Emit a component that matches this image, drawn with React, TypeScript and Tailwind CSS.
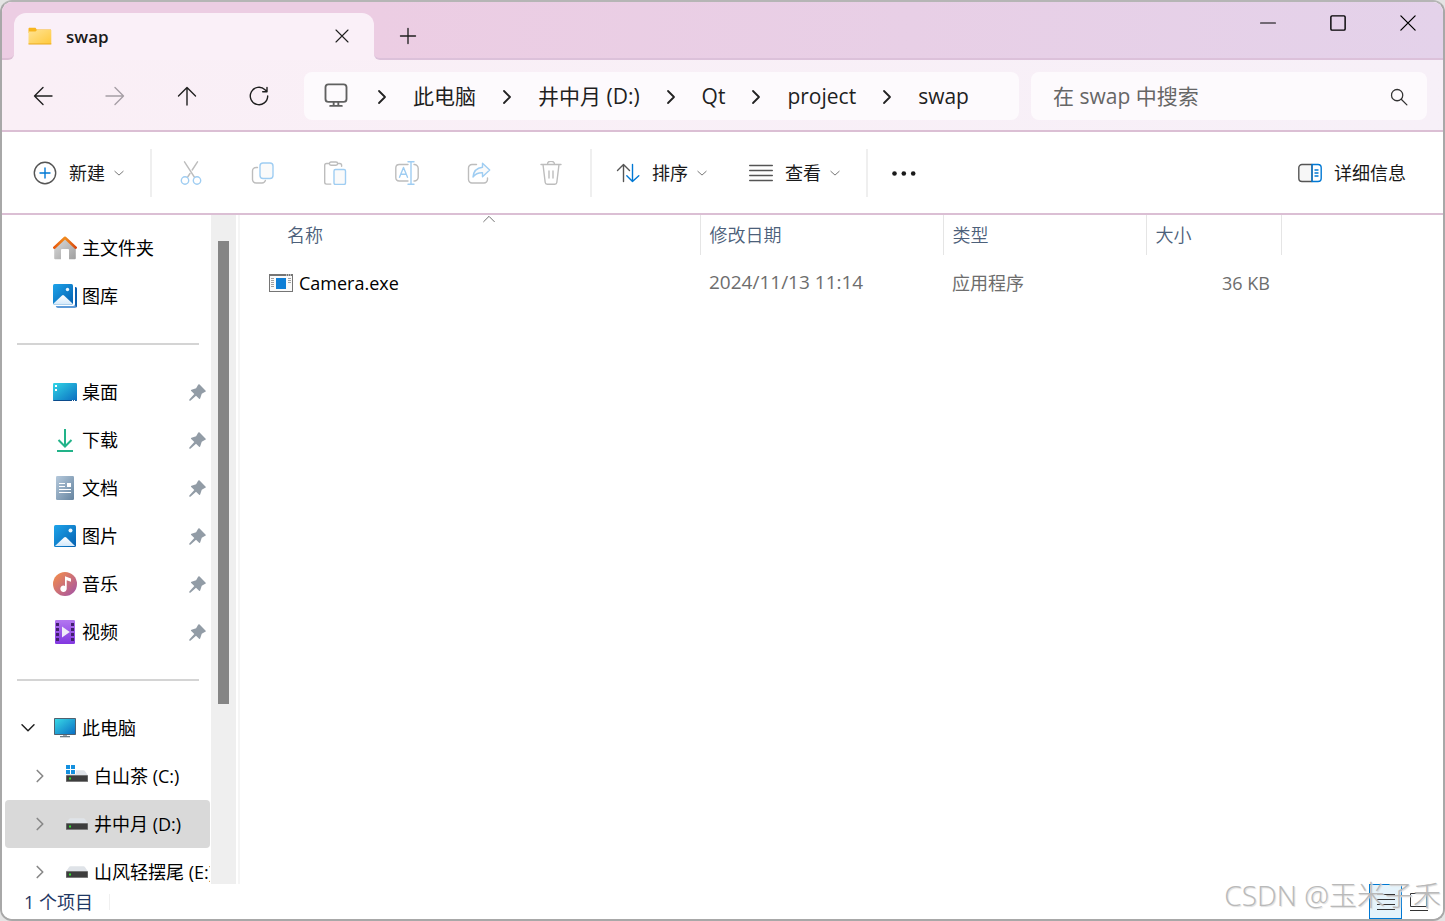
import { Fragment } from 'react';
import type { ReactNode } from 'react';

const stroke = {
  fill: 'none',
  strokeLinecap: 'round' as const,
  strokeLinejoin: 'round' as const,
};

function Icon({ children, className = 'size-6', color = '#1f1f1f', width = 1.4 }: {
  children: ReactNode; className?: string; color?: string; width?: number;
}) {
  return (
    <svg viewBox="0 0 24 24" className={`shrink-0 ${className}`} stroke={color} strokeWidth={width} aria-hidden="true" {...stroke}>
      {children}
    </svg>
  );
}

const GREY = '#bdbdbd';
const BLUE = '#9fcdf2';

function FolderIcon() {
  return (
    <svg viewBox="0 0 24 18" className="h-[18px] w-6 shrink-0" aria-hidden="true">
      <defs>
        <linearGradient id="folder" x1="0" y1="0" x2="1" y2="1">
          <stop offset="0" stopColor="#ffe394" />
          <stop offset="1" stopColor="#ffc93c" />
        </linearGradient>
      </defs>
      <path d="M1 .8h6.500l1.200 1.700H23V6H.5V1.500z" fill="#f7b51e" />
      <path d="M.5 4.600h7L9 3h14.300v14H.5z" fill="url(#folder)" />
      <path d="M.5 16.500h22.800v1H.5z" fill="#e9a81c" />
    </svg>
  );
}

function HomeIcon() {
  return (
    <svg viewBox="0 0 24 24" className="size-6" aria-hidden="true">
      <defs>
        <linearGradient id="roof" x1="0" y1="0" x2="1" y2="0">
          <stop offset="0" stopColor="#e8590c" /><stop offset=".5" stopColor="#f08c1e" /><stop offset="1" stopColor="#d9480f" />
        </linearGradient>
        <linearGradient id="wall" x1="0" y1="0" x2="1" y2="1">
          <stop offset="0" stopColor="#dcdcdc" /><stop offset="1" stopColor="#9f9f9f" />
        </linearGradient>
      </defs>
      <path d="M1.200 11 12 2l10.800 9v11.200a1 1 0 0 1-1 1H16V14a1 1 0 0 0-1-1H9a1 1 0 0 0-1 1v9.200H2.200a1 1 0 0 1-1-1z" fill="url(#wall)" />
      <path d="M1.300 11.700 12 1.800l10.700 9.900" fill="none" stroke="url(#roof)" strokeWidth="2.600" strokeLinecap="round" strokeLinejoin="round" />
    </svg>
  );
}

function PictureDefs({ id }: { id: string }) {
  return (
    <defs>
      <linearGradient id={id} x1="0" y1="0" x2="1" y2="1">
        <stop offset="0" stopColor="#1ea4ea" /><stop offset="1" stopColor="#0560b0" />
      </linearGradient>
      <linearGradient id={`${id}-hill`} x1="0" y1="0" x2="0" y2="1">
        <stop offset="0" stopColor="#fff" /><stop offset="1" stopColor="#d3e9fb" />
      </linearGradient>
    </defs>
  );
}

function GalleryIcon() {
  return (
    <svg viewBox="0 0 24 24" className="size-6" aria-hidden="true">
      <PictureDefs id="gallery" />
      <path d="M22 3c1.200.2 2 .8 2 2v16.500c0 1.500-1 2.500-2.500 2.500H5c-1.200 0-2-.8-2.200-2H20a2 2 0 0 0 2-2z" fill="#5f9bd8" />
      <path d="M22 3c1.200.2 2 .8 2 2v16.500c0 1-.5 1.600-1 2l-1-3z" fill="#0b5fb0" />
      <rect width="20" height="20.500" rx="1.500" fill="url(#gallery)" />
      <path d="M.5 19.500 9 11.500q1-1 2 0l8.500 8q-.5 1-1.500 1H2q-1 0-1.500-1z" fill="url(#gallery-hill)" />
      <circle cx="14.500" cy="5.500" r="1.700" fill="#e9f6ff" />
    </svg>
  );
}

function PictureIcon() {
  return (
    <svg viewBox="0 0 24 24" className="size-6" aria-hidden="true">
      <PictureDefs id="picture" />
      <rect x="1" y="1" width="22" height="22" rx="1.500" fill="url(#picture)" />
      <path d="M2 22 11 13.500q1.200-1 2.300 0L22 22z" fill="url(#picture-hill)" />
      <circle cx="17.500" cy="6.500" r="2" fill="#e9f6ff" />
    </svg>
  );
}

function DesktopIcon() {
  return (
    <svg viewBox="0 0 24 24" className="size-6" aria-hidden="true">
      <defs>
        <linearGradient id="desk" x1="0" y1="0" x2="1" y2="1">
          <stop offset="0" stopColor="#31d5e6" /><stop offset="1" stopColor="#0a6cc0" />
        </linearGradient>
      </defs>
      <rect y="3" width="24" height="18" rx="1.300" fill="url(#desk)" />
      <path d="M.3 20h23.400v.5a.6.6 0 0 1-.6.500H1a.6.6 0 0 1-.7-.5z" fill="#0b4b8c" />
      <path d="M2 5h2v2H2zM2 9h2v2H2zM19 20h1v1h-1zM21 20h1v1h-1z" fill="#fff" />
    </svg>
  );
}

function DownloadIcon() {
  return (
    <svg viewBox="0 0 24 24" className="size-6" fill="none" stroke="#22b389" strokeWidth="2" aria-hidden="true">
      <path d="M12 1v17M5.500 12l6.500 6.500 6.500-6.500M4 23h16" />
    </svg>
  );
}

function DocumentIcon() {
  return (
    <svg viewBox="0 0 24 24" className="size-6" aria-hidden="true">
      <defs>
        <linearGradient id="doc" x1="0" y1="0" x2="1" y2="1">
          <stop offset="0" stopColor="#b5c9dc" /><stop offset="1" stopColor="#66849f" />
        </linearGradient>
      </defs>
      <rect x="3" width="18" height="24" rx="1.300" fill="url(#doc)" />
      <path d="M6 7.500h6M6 10.500h6M6 13.500h12M6 16.500h12" stroke="#fff" strokeWidth="1" />
      <path d="M14 7h4v4h-4z" fill="#fff" />
    </svg>
  );
}

function MusicIcon() {
  return (
    <svg viewBox="0 0 24 24" className="size-6" aria-hidden="true">
      <defs>
        <linearGradient id="music" x1="0" y1="0" x2="1" y2="1">
          <stop offset=".1" stopColor="#f08a4f" /><stop offset=".9" stopColor="#a9579f" />
        </linearGradient>
      </defs>
      <circle cx="12" cy="12" r="12" fill="url(#music)" />
      <path d="M12 4.300 18 6.500v3.300l-4.300-1.600v8.500a3.200 3.200 0 1 1-1.700-2.800z" fill="#fff" />
    </svg>
  );
}

function VideoIcon() {
  return (
    <svg viewBox="0 0 24 24" className="size-6" aria-hidden="true">
      <defs>
        <linearGradient id="video" x1="0" y1="0" x2="0" y2="1">
          <stop offset="0" stopColor="#b377f0" /><stop offset="1" stopColor="#8237e0" />
        </linearGradient>
      </defs>
      <rect x="2" width="20" height="24" rx="1.300" fill="url(#video)" />
      <path d="M3 3h3v3H3zM3 8h3v3H3zM3 13h3v3H3zM3 18h3v3H3zM18 3h3v3h-3zM18 8h3v3h-3zM18 13h3v3h-3zM18 18h3v3h-3z" fill="#42206f" />
      <path d="M9 6.500 16.800 12 9 17.500z" fill="#f0ebf8" />
    </svg>
  );
}

function ComputerIcon() {
  return (
    <svg viewBox="0 0 24 24" className="size-6" aria-hidden="true">
      <defs>
        <linearGradient id="pc" x1="0" y1="0" x2="1" y2="1">
          <stop offset="0" stopColor="#38d8e6" /><stop offset="1" stopColor="#0a6fc4" />
        </linearGradient>
      </defs>
      <path d="M10 18h4v2.500h-4z" fill="#9aa5ad" />
      <path d="M7 20h10v1.300H7z" fill="#6d7a83" />
      <rect x="1" y="2" width="22" height="17" rx=".8" fill="#4f6170" />
      <rect x="2" y="3" width="20" height="15" fill="url(#pc)" />
    </svg>
  );
}

function DriveIcon({ system = false }: { system?: boolean }) {
  return (
    <svg viewBox="0 0 24 24" className="size-6" aria-hidden="true">
      <path d="M5.500 6.300h13q1 0 1.600 1L23 11.500H1l2.900-4.200q.6-1 1.600-1z" fill="#dfe3e8" />
      <rect x="1" y="11" width="22" height="7" rx=".6" fill="#8a8a8a" />
      <rect x="1.500" y="11.700" width="21" height="5.500" fill="#3d3d3d" />
      <rect x="4" y="13.500" width="2" height="2" fill="#2fe02f" />
      {system && (
        <g>
          <path d="M0 0h11v10H0z" fill="#fff" />
          <path d="M1 1h4v4H1zM6 1h4v4H6zM1 6h4v4H1zM6 6h4v4H6z" fill="#1490df" />
        </g>
      )}
    </svg>
  );
}

function PinIcon() {
  return (
    <svg viewBox="0 0 16 16" className="size-[17px] shrink-0" fill="#929ca6" aria-hidden="true">
      <path d="M9.700.3 15.700 6.300q.5.800-.4 1.100L12 9.200l-1.400 4.300q-.4 1-1.100.3L6.600 11 1.300 15.700H.3v-1L5 9.400 2.100 6.600q-.7-.7.3-1.100L6.700 4 8.600.7q.4-.8 1.100-.4z" />
    </svg>
  );
}

function AppIcon() {
  return (
    <svg viewBox="0 0 24 18" className="h-[18px] w-6 shrink-0" aria-hidden="true">
      <rect x=".5" y=".5" width="23" height="17" fill="#fafafa" stroke="#757575" />
      <path d="M0 0h24v2H0z" fill="#757575" />
      <path d="M17 1h1M19 1h1M21 1h1" stroke="#fff" strokeWidth="1" />
      <path d="M2 4.500h3M2 6.500h3M2 8.500h3M2 10.500h3M2 12.500h3M19 4.500h3M19 6.500h3M19 8.500h3" stroke="#a0a0a0" />
      <rect x="7" y="4" width="10" height="11" fill="#0f7fd6" />
    </svg>
  );
}

function ChevronDown() {
  return <Icon className="size-[10px]" color="#777" width={2.400}><path d="m2 8 10 9 10-9" /></Icon>;
}

function ChevronRight({ className = 'size-6', color = '#222', width = 1.800 }: { className?: string; color?: string; width?: number }) {
  return <Icon className={className} color={color} width={width}><path d="m9 6 6 6-6 6" /></Icon>;
}

function NavButtons() {
  const button = 'flex size-12 items-center justify-center rounded-lg';
  return (
    <div className="flex shrink-0 gap-6">
      <button aria-label="后退" className={button}><Icon><path d="M21 12H3.500M12 3.500 3.500 12l8.500 8.500" /></Icon></button>
      <button aria-label="前进" disabled className={button}><Icon color="#a59fa5"><path d="M3 12h17.500M12 3.500l8.500 8.500-8.500 8.500" /></Icon></button>
      <button aria-label="向上" className={button}><Icon><path d="M12 21V3.500M3.500 12 12 3.500l8.500 8.500" /></Icon></button>
      <button aria-label="刷新" className={button}>
        <Icon><path d="M20.700 12a8.700 8.700 0 1 1-2.700-6.300L20 7.600M20 3.500v4.300h-4.300" /></Icon>
      </button>
    </div>
  );
}

const crumbs = ['此电脑', '井中月 (D:)', 'Qt', 'project', 'swap'];

function TitleBar() {
  return (
    <div className="flex h-[58px]">
      <div className="w-3 shrink-0 bg-[#faeff7]">
        <div className="h-full rounded-br-md border-b-2 border-[#dcbfd5] bg-[#eccde3]" />
      </div>
      <div className="w-[360px] min-w-0 bg-[#eccde3] pt-[11px]">
        <div className="flex h-full items-center rounded-t-xl bg-[#faf0f8] pr-5 pb-[2px] pl-[14px]">
          <FolderIcon />
          <span className="ml-[14px] flex-1 truncate pt-[2px] text-[17px] font-semibold text-[#1a1a1a]">swap</span>
          <button aria-label="关闭标签页" className="flex size-6 items-center justify-center">
            <Icon className="size-[18px]" width={1.500}><path d="m4 4 16 16M20 4 4 20" /></Icon>
          </button>
        </div>
      </div>
      <div className="min-w-0 flex-1 bg-[#faeff7]">
        <div className="flex h-full justify-between rounded-bl-md border-b-2 border-[#dcc1da] bg-linear-to-r from-[#eccde3] via-[#e8cfe6] to-[#e4d2ea]">
          <button aria-label="新建标签页" className="mt-[10px] ml-[10px] flex size-12 items-center justify-center">
            <Icon className="size-[18px]" width={1.800}><path d="M12 2v20M2 12h20" /></Icon>
          </button>
          <div className="flex h-[41px]">
            <button aria-label="最小化" className="flex w-[70px] items-center justify-center">
              <Icon className="size-[18px]" color="#000" width={1.400}><path d="M2 12h20" /></Icon>
            </button>
            <button aria-label="最大化" className="flex w-[70px] items-center justify-center">
              <Icon className="size-[18px]" color="#000" width={1.900}><rect x="2.500" y="2.500" width="19" height="19" rx="1.500" /></Icon>
            </button>
            <button aria-label="关闭" className="flex w-[70px] items-center justify-center">
              <Icon className="size-[18px]" color="#000" width={1.700}><path d="m2.500 2.500 19 19M21.500 2.500l-19 19" /></Icon>
            </button>
          </div>
        </div>
      </div>
    </div>
  );
}

function AddressRow() {
  return (
    <div className="flex h-[72px] items-center gap-3 border-b-2 border-[#dbbfd4] bg-linear-to-r from-[#faeff6] to-[#f7f0f8] pt-[2px] pr-4 pl-[17px]">
      <NavButtons />
      <nav aria-label="路径" className="ml-[9px] flex h-12 min-w-0 flex-[715_1_715px] items-center rounded-lg bg-[#fdfafd] pl-[18px] text-[21px] whitespace-nowrap text-[#1f1f1f]">
        <Icon className="mr-px size-7" color="#606060" width={1.600}>
          <rect x="3" y="2" width="18" height="15" rx="2.500" />
          <path d="M10 17v3.300M14 17v3.300M7 20.500h10" />
        </Icon>
        {crumbs.map((name) => (
          <Fragment key={name}>
            <span className="flex w-[62px] shrink-0 justify-center pt-[2px]"><ChevronRight width={1.800} /></span>
            <a href="#" className="pt-[2px]">{name}</a>
          </Fragment>
        ))}
      </nav>
      <label className="flex h-12 min-w-0 flex-[396_1_396px] items-center rounded-lg bg-[#fdfafd] pt-[2px] pr-[19px] pl-[22px]">
        <input type="search" aria-label="搜索" placeholder="在 swap 中搜索" className="min-w-0 flex-1 bg-transparent text-[21px] outline-none placeholder:text-[#666]" />
        <Icon className="size-[18px]" color="#333" width={1.700}><circle cx="9.500" cy="9.500" r="7.500" /><path d="m15 15 7.500 7.500" /></Icon>
      </label>
    </div>
  );
}

const editTools: { label: string; art: ReactNode }[] = [
  {
    label: '剪切',
    art: (
      <>
        <path d="M5.500.8 15.300 16M18.500.8 13.200 9M11 12.500 8.700 16" stroke={GREY} />
        <circle cx="6" cy="19.500" r="3.700" stroke={BLUE} /><circle cx="18" cy="19.500" r="3.700" stroke={BLUE} />
      </>
    ),
  },
  {
    label: '复制',
    art: (
      <>
        <path d="M6.500 6.500H5a3.500 3.500 0 0 0-3.500 3.500v8.500A3.500 3.500 0 0 0 5 22h6a3.500 3.500 0 0 0 3.400-2.600" stroke={GREY} />
        <rect x="9" y="2" width="13" height="15.500" rx="3" fill="#fafafa" stroke={BLUE} />
      </>
    ),
  },
  {
    label: '粘贴',
    art: (
      <>
        <path d="M6.500 2.500H3.500A1.800 1.800 0 0 0 1.700 4.300v17a1.800 1.800 0 0 0 1.800 1.800h4.300M14.500 2.500h2.300a1.800 1.800 0 0 1 1.800 1.800v1M8 1h5a1.500 1.500 0 0 1 0 3.200H8A1.500 1.500 0 0 1 8 1z" stroke={GREY} />
        <rect x="11" y="8.500" width="11.500" height="15" rx="1.500" fill="#fafafa" stroke={BLUE} />
      </>
    ),
  },
  {
    label: '重命名',
    art: (
      <>
        <path d="M13 3.500H4.200A3.500 3.500 0 0 0 .8 7v9.500A3.500 3.500 0 0 0 4.200 20H13M19 3.500a3.800 3.800 0 0 1 4.200 3.700v9A3.800 3.800 0 0 1 19 20" stroke={GREY} />
        <path d="M4.500 16.300 8.500 6.500l4 9.800M5.800 13.300h5.400M16 .8v22.400M13 .8h6M13 23.200h6" stroke={BLUE} />
      </>
    ),
  },
  {
    label: '共享',
    art: (
      <>
        <path d="M9.500 3.500H5A3.500 3.500 0 0 0 1.500 7v11.500A3.500 3.500 0 0 0 5 22h12a3.500 3.500 0 0 0 3.500-3.500V17" stroke={GREY} />
        <path d="M15.500 2.200 22.700 9l-7.200 6.800v-4c-4-.2-6.800.8-9.500 4.200.4-5.500 3.700-9.200 9.500-9.800z" fill="#fafafa" stroke={BLUE} />
      </>
    ),
  },
  {
    label: '删除',
    art: <path d="M2 3.500h20M4 3.500l2.200 18A2 2 0 0 0 8.200 23.200h7.600a2 2 0 0 0 2-1.700L20 3.500M8.500 3.200a3.500 3 0 0 1 7 0M10 10v7M14 10v7" stroke={GREY} />,
  },
];

function Divider() {
  return <div className="h-12 w-[2px] shrink-0 bg-[#efefef]" />;
}

function Toolbar() {
  const button = 'flex shrink-0 items-center whitespace-nowrap';
  return (
    <div className="flex h-[83px] items-center border-b-2 border-[#dbbfd4] bg-white text-lg text-[#1a1a1a]">
      <button className={`${button} gap-3 pr-[26px] pl-[31px]`}>
        <Icon color="#555"><circle cx="12" cy="12" r="10.700" /><path d="M12 7v10M7 12h10" stroke="#0078d4" /></Icon>
        <span className="flex items-center gap-[9px]">新建<ChevronDown /></span>
      </button>
      <Divider />
      <div className="flex px-[3px]">
        {editTools.map((tool) => (
          <button key={tool.label} aria-label={tool.label} disabled className="flex h-12 w-[72px] items-center justify-center">
            <Icon>{tool.art}</Icon>
          </button>
        ))}
      </div>
      <Divider />
      <button className={`${button} gap-3 pl-6`}>
        <Icon><path d="M7.500 20.500V3.500M1.500 9.500l6-6 6 6" stroke="#555" /><path d="M16.500 3.500v17M10.800 14.800l5.700 5.700 6.300-5.700" stroke="#0078d4" /></Icon>
        <span className="flex items-center gap-[9px]">排序<ChevronDown /></span>
      </button>
      <button className={`${button} gap-3 pr-[26px] pl-[42px]`}>
        <Icon color="#555"><path d="M.7 4.500h22.600M.7 9.500h22.600M.7 14.500h22.600M.7 19.500h22.600" /></Icon>
        <span className="flex items-center gap-[9px]">查看<ChevronDown /></span>
      </button>
      <Divider />
      <button aria-label="更多" className="flex h-12 w-[72px] items-center justify-center">
        <Icon><g fill="#1a1a1a" stroke="none"><circle cx="2.500" cy="12.500" r="2.300" /><circle cx="11.800" cy="12.500" r="2.300" /><circle cx="21.200" cy="12.500" r="2.300" /></g></Icon>
      </button>
      <button className={`${button} mr-[37px] ml-auto gap-3`}>
        <Icon color="#555">
          <path d="M14 3.500H4A3.200 3.200 0 0 0 .8 6.700v10.600A3.200 3.200 0 0 0 4 20.500h10z" fill="#f7f7f7" />
          <path d="M14 3.500h6a3.200 3.200 0 0 1 3.200 3.200v10.600a3.200 3.200 0 0 1-3.200 3.200h-6zM17 9h3M17 12h3M17 15h3" stroke="#0078d4" />
        </Icon>
        详细信息
      </button>
    </div>
  );
}

function Place({ icon, label, pinned = false }: { icon: ReactNode; label: string; pinned?: boolean }) {
  return (
    <li>
      <a href="#" className="flex h-12 items-center gap-[5px] pr-[5px] pl-[51px]">
        {icon}
        <span className="flex-1 whitespace-nowrap">{label}</span>
        {pinned && <PinIcon />}
      </a>
    </li>
  );
}

function Drive({ label, system = false, selected = false }: { label: string; system?: boolean; selected?: boolean }) {
  return (
    <li>
      <a href="#" className={`mr-px ml-[3px] flex h-12 items-center gap-[5px] overflow-hidden rounded-sm pl-6 ${selected ? 'bg-[#d9d9d9]' : ''}`}>
        <ChevronRight className="size-[22px]" color="#888" width={1.800} />
        <span className="ml-[9px] shrink-0"><DriveIcon system={system} /></span>
        <span className="whitespace-nowrap">{label}</span>
      </a>
    </li>
  );
}

function Separator() {
  return <li role="separator" className="flex h-12 items-center pr-3 pl-[15px]"><div className="h-[2px] flex-1 bg-[#d4d4d4]" /></li>;
}

function Sidebar() {
  return (
    <aside className="flex w-[238px] shrink-0 overflow-hidden border-r-2 border-[#f5f5f5]">
      <ul className="w-[209px] shrink-0 overflow-hidden pt-[9px] text-lg text-black">
        <Place icon={<HomeIcon />} label="主文件夹" />
        <Place icon={<GalleryIcon />} label="图库" />
        <Separator />
        <Place icon={<DesktopIcon />} label="桌面" pinned />
        <Place icon={<DownloadIcon />} label="下载" pinned />
        <Place icon={<DocumentIcon />} label="文档" pinned />
        <Place icon={<PictureIcon />} label="图片" pinned />
        <Place icon={<MusicIcon />} label="音乐" pinned />
        <Place icon={<VideoIcon />} label="视频" pinned />
        <Separator />
        <li>
          <a href="#" className="flex h-12 items-center gap-[5px] pl-[18px]">
            <Icon className="size-4" width={2.200}><path d="m3 7 9 9 9-9" /></Icon>
            <span className="ml-3"><ComputerIcon /></span>
            <span>此电脑</span>
          </a>
        </li>
        <Drive label="白山茶 (C:)" system />
        <Drive label="井中月 (D:)" selected />
        <Drive label="山风轻摆尾 (E:)" />
      </ul>
      <div className="w-[25px] bg-[#efefef] pt-[26px]">
        <div className="mx-auto h-[463px] w-[11px] bg-[#858585]" />
      </div>
    </aside>
  );
}

function FileTable() {
  const head = 'h-10 border-r border-[#e5e5e5] p-0 text-left font-[350] text-[#4c607a]';
  return (
    <main className="min-w-0 flex-1 overflow-hidden">
      <table className="table-fixed border-collapse text-lg whitespace-nowrap">
        <colgroup>
          <col className="w-[460px]" /><col className="w-[243px]" /><col className="w-[203px]" /><col className="w-[135px]" />
        </colgroup>
        <thead>
          <tr>
            <th className={`${head} pl-[47px]`} aria-sort="ascending">
              <div className="flex">
                <span className="w-[194px]">名称</span>
                <Icon className="-mt-2 size-4" color="#666"><path d="m4 13 8-8 8 8" /></Icon>
              </div>
            </th>
            <th className={`${head} pl-[9px]`}>修改日期</th>
            <th className={`${head} pl-[9px]`}>类型</th>
            <th className={`${head} pl-[9px]`}>大小</th>
          </tr>
        </thead>
        <tbody>
          <tr className="h-14 text-[#6d6d6d]">
            <td className="p-0 pl-[29px]">
              <a href="#" className="flex items-center gap-[6px] font-normal text-black"><AppIcon />Camera.exe</a>
            </td>
            <td className="p-0 pl-[9px] text-[19px] font-normal">2024/11/13 11:14</td>
            <td className="p-0 pl-[9px]">应用程序</td>
            <td className="p-0 pr-[11px] text-right font-normal">36 KB</td>
          </tr>
        </tbody>
      </table>
    </main>
  );
}

function StatusBar() {
  return (
    <footer className="relative flex h-[35px] shrink-0 items-center bg-white text-lg text-[#1f3864]">
      <span className="pl-[22px]">1 个项目</span>
      <div className="ml-4 h-4 w-px bg-[#f0f0f0]" />
      <div className="mr-[14px] ml-auto flex h-full items-center gap-[7px]">
        <button aria-label="详细列表" className="flex h-full w-[33px] items-center justify-center border border-[#0078d4] bg-[#e5f3fb]">
          <svg viewBox="0 0 20 20" className="size-5" stroke="#333" aria-hidden="true"><path d="M1 2.500h18M1 7.500h18M1 12.500h18M1 17.500h18" /></svg>
        </button>
        <button aria-label="大缩略图">
          <svg viewBox="0 0 20 20" className="size-5" fill="none" stroke="#333" aria-hidden="true"><path d="M1.500 1.500h16v13h-16zM1 18.500h18" /></svg>
        </button>
      </div>
      <span className="pointer-events-none absolute right-[2px] bottom-1 text-[28px] leading-10 font-light whitespace-nowrap text-[#b9b9b9] [text-shadow:1px_1px_1px_#ddd]">
        CSDN @玉米子禾
      </span>
    </footer>
  );
}

export default function App() {
  return (
    <div className="h-screen bg-[#e4e4e4] font-['Open_Sans','Noto_Sans_CJK_SC',sans-serif] font-[380]" lang="zh-CN">
      <div className="flex h-full flex-col overflow-hidden rounded-xl border-2 border-[#a8a8a8] border-t-[#b5b5b5] bg-white">
        <header className="shrink-0">
          <TitleBar />
          <AddressRow />
          <Toolbar />
        </header>
        <div className="flex min-h-0 flex-1">
          <Sidebar />
          <FileTable />
        </div>
        <StatusBar />
      </div>
    </div>
  );
}
